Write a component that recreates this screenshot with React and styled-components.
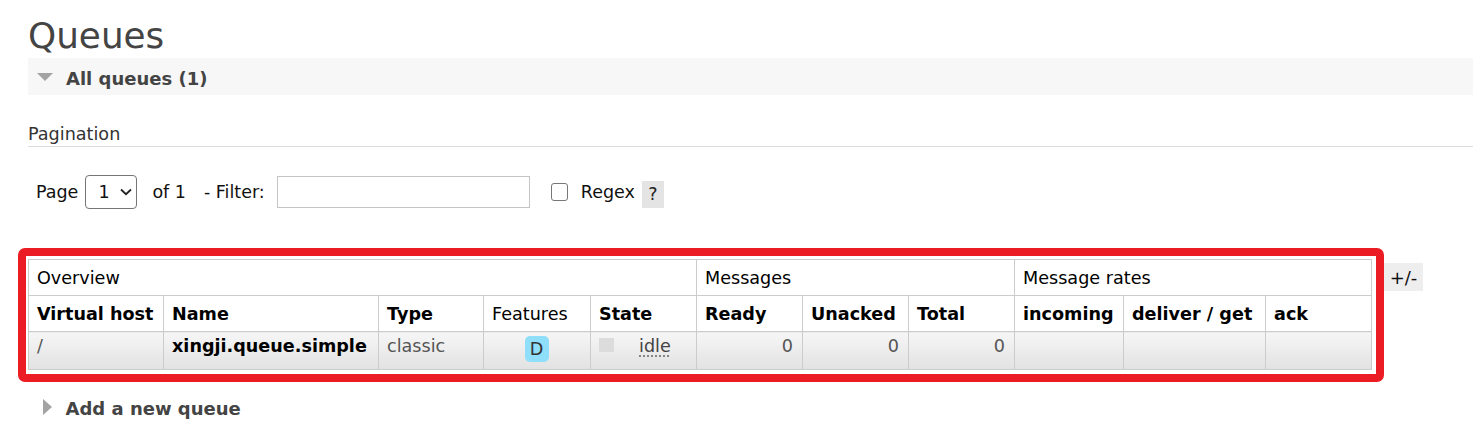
import React from 'react';
import styled, { createGlobalStyle } from 'styled-components';

const GlobalStyle = createGlobalStyle`
  html, body {
    margin: 0;
    padding: 0;
    background: #fff;
  }
  body {
    font-family: "DejaVu Sans", Verdana, sans-serif;
    color: #333;
  }
`;

const Main = styled.div`
  padding: 16px 0 0 28px;
`;

const Title = styled.h1`
  margin: 0 0 2px;
  font-size: 35.8px;
  font-weight: normal;
  line-height: 40px;
  color: #444;
`;

const SectionBar = styled.div`
  display: flex;
  align-items: center;
  box-sizing: border-box;
  height: 37px;
  padding-top: 4px;
  background: ${(p) => (p.$plain ? 'transparent' : '#f7f7f7')};
  margin-top: ${(p) => p.$top || 0}px;
`;

const ArrowDown = styled.span`
  width: 0;
  height: 0;
  margin: 0 13px 3px 9px;
  border-left: 8px solid transparent;
  border-right: 8px solid transparent;
  border-top: 8.5px solid #a3a3a3;
`;

const ArrowRight = styled.span`
  width: 0;
  height: 0;
  margin: 0 13.5px 4px 15px;
  border-top: 8px solid transparent;
  border-bottom: 8px solid transparent;
  border-left: 9.5px solid #a3a3a3;
`;

const SectionTitle = styled.h2`
  margin: 0;
  font-size: 18px;
  font-weight: bold;
  line-height: normal;
  color: #444;
`;

const SubHeading = styled.h3`
  margin: 29px 0 0;
  padding-bottom: 2px;
  font-size: 17.6px;
  font-weight: normal;
  line-height: 20px;
  color: #333;
  border-bottom: 1px solid #ddd;
`;

const FilterRow = styled.div`
  display: flex;
  align-items: center;
  height: 34px;
  margin-top: 28px;
  padding-left: 8px;
  font-size: 17.5px;
  color: #111;
`;

const Label = styled.span`
  margin-left: ${(p) => p.$gap || 0}px;
  white-space: nowrap;
`;

const SelectBox = styled.div`
  display: inline-flex;
  align-items: center;
  box-sizing: border-box;
  width: 52px;
  height: 34px;
  margin-left: 7px;
  padding: 0 0 0 12px;
  border: 1px solid #767676;
  border-radius: 4px;
  background: #fff;
  color: #111;

  svg {
    margin-left: 10px;
  }
`;

const TextInput = styled.input`
  box-sizing: border-box;
  width: 253px;
  height: 32px;
  margin: 0 0 0 12px;
  border: 1px solid #c4c4c4;
  background: #fff;
  font: inherit;
`;

const Check = styled.input`
  appearance: none;
  box-sizing: border-box;
  width: 17px;
  height: 18px;
  margin: 0 0 0 21px;
  border: 1.3px solid #767676;
  border-radius: 3px;
  background: #fff;
`;

const HelpTag = styled.span`
  display: inline-flex;
  align-items: center;
  justify-content: center;
  width: 22px;
  height: 27px;
  margin: 4px 0 0 7px;
  background: #e4e4e4;
  color: #222;
`;

const TableRow = styled.div`
  display: flex;
  align-items: flex-start;
  margin-top: 50px;
`;

const Highlight = styled.div`
  position: relative;

  &::after {
    content: '';
    position: absolute;
    left: -10px;
    top: -11px;
    right: -12px;
    bottom: -12px;
    border: 8px solid #ec1c24;
    border-radius: 7px;
    pointer-events: none;
  }
`;

const Table = styled.table`
  table-layout: fixed;
  width: 1343px;
  border-collapse: collapse;
  font-size: 17.6px;
  color: #000;
`;

const Col = styled.col`
  width: ${(p) => p.$w}px;
`;

const GroupCell = styled.th`
  height: 35px;
  padding: 0 8px;
  border: 1px solid #ccc;
  text-align: left;
  font-weight: normal;
  background: #fff;
`;

const HeadCell = styled.th`
  height: 35px;
  padding: 0 8px;
  border: 1px solid #ccc;
  text-align: left;
  font-weight: ${(p) => (p.$light ? 'normal' : 'bold')};
  white-space: nowrap;
  background: #fff;
`;

const Cell = styled.td`
  height: 33px;
  padding: 4px 9px 0 8px;
  vertical-align: top;
  border: 1px solid #ccc;
  background: linear-gradient(#f6f6f6, #e2e2e2);
  color: ${(p) => (p.$strong ? '#000' : '#555')};
  font-weight: ${(p) => (p.$strong ? 'bold' : 'normal')};
  text-align: ${(p) => p.$align || 'left'};
  white-space: nowrap;
`;

const Badge = styled.span`
  display: inline-block;
  box-sizing: border-box;
  width: 24px;
  height: 26px;
  padding-top: 3px;
  line-height: 20px;
  border-radius: 5px;
  background: #8fdffb;
  color: #333;
  text-align: center;
  vertical-align: 2px;
`;

const StateDot = styled.span`
  display: inline-block;
  width: 15px;
  height: 14px;
  margin-right: 25px;
  background: #dcdcdc;
`;

const StateText = styled.abbr`
  color: #444;
  text-decoration: underline dotted #777;
  text-underline-offset: 4px;
`;

const Toggle = styled.span`
  display: inline-flex;
  align-items: center;
  justify-content: center;
  width: 39px;
  height: 28px;
  margin: 4px 0 0 12px;
  background: #eee;
  font-size: 18px;
  color: #111;
`;

const columns = [135, 215, 105, 107, 106, 106, 106, 106, 109, 142, 106];

const Chevron = () => (
  <svg width="12" height="8" viewBox="0 0 12 8">
    <path d="M1 1.5 L6 6.2 L11 1.5" fill="none" stroke="#222" strokeWidth="1.8" />
  </svg>
);

const App = () => {
  return (
    <>
      <GlobalStyle />
      <Main>
        <Title>Queues</Title>
        <SectionBar>
          <ArrowDown />
          <SectionTitle>All queues (1)</SectionTitle>
        </SectionBar>

        <SubHeading>Pagination</SubHeading>
        <FilterRow>
          <Label>Page</Label>
          <SelectBox>
            1<Chevron />
          </SelectBox>
          <Label $gap={15}>of 1</Label>
          <Label $gap={18}>- Filter:</Label>
          <TextInput type="text" />
          <Check type="checkbox" />
          <Label $gap={13}>Regex</Label>
          <HelpTag>?</HelpTag>
        </FilterRow>

        <TableRow>
          <Highlight>
            <Table>
              <colgroup>
                {columns.map((w, i) => (
                  <Col key={i} $w={w} />
                ))}
              </colgroup>
              <thead>
                <tr>
                  <GroupCell colSpan={5}>Overview</GroupCell>
                  <GroupCell colSpan={3}>Messages</GroupCell>
                  <GroupCell colSpan={3}>Message rates</GroupCell>
                </tr>
                <tr>
                  <HeadCell>Virtual host</HeadCell>
                  <HeadCell>Name</HeadCell>
                  <HeadCell>Type</HeadCell>
                  <HeadCell $light>Features</HeadCell>
                  <HeadCell>State</HeadCell>
                  <HeadCell>Ready</HeadCell>
                  <HeadCell>Unacked</HeadCell>
                  <HeadCell>Total</HeadCell>
                  <HeadCell>incoming</HeadCell>
                  <HeadCell>deliver / get</HeadCell>
                  <HeadCell>ack</HeadCell>
                </tr>
              </thead>
              <tbody>
                <tr>
                  <Cell>/</Cell>
                  <Cell $strong>xingji.queue.simple</Cell>
                  <Cell>classic</Cell>
                  <Cell $align="center">
                    <Badge>D</Badge>
                  </Cell>
                  <Cell>
                    <StateDot />
                    <StateText>idle</StateText>
                  </Cell>
                  <Cell $align="right">0</Cell>
                  <Cell $align="right">0</Cell>
                  <Cell $align="right">0</Cell>
                  <Cell />
                  <Cell />
                  <Cell />
                </tr>
              </tbody>
            </Table>
          </Highlight>
          <Toggle>+/-</Toggle>
        </TableRow>

        <SectionBar $plain $top={18}>
          <ArrowRight />
          <SectionTitle>Add a new queue</SectionTitle>
        </SectionBar>
      </Main>
    </>
  );
};

export default App;
